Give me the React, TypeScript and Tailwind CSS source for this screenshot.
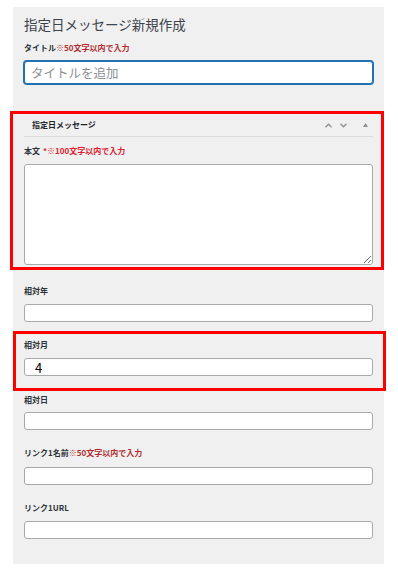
import React from 'react';

const font = { fontFamily: '"Noto Sans CJK JP", "Liberation Sans", sans-serif' };

function Label({ text, note, noteClass = 'text-[#b32d2e]' }: { text: string; note?: string; noteClass?: string }) {
  return (
    <div className="h-[12px] flex items-center text-[8px] font-bold leading-none text-[#2c3338] whitespace-nowrap">
      <span>{text}</span>
      {note && <span className={noteClass}>{note}</span>}
    </div>
  );
}

function Field({ value = '' }: { value?: string }) {
  return (
    <input
      readOnly
      defaultValue={value}
      className="block w-full h-[18px] bg-white border border-[#a7aaad] rounded-[3px] px-[10px] text-[13px] leading-none text-black outline-none"
    />
  );
}

export default function App() {
  return (
    <div className="w-[398px] h-[571px] bg-white overflow-hidden pt-[7px]" style={font}>
      <div className="ml-[13px] w-[371px] h-[557px] bg-[#f0f0f1] px-[11px] pt-[8px]">
        <h1 className="h-[20px] flex items-center text-[13.5px] leading-none text-[#3c434a] whitespace-nowrap">
          指定日メッセージ新規作成
        </h1>
        <div className="mt-[7px]">
          <Label text="タイトル" note="※50文字以内で入力" />
        </div>
        <input
          readOnly
          placeholder="タイトルを追加"
          className="mt-[7px] block w-full h-[23px] bg-white border border-[#2271b1] shadow-[0_0_0_1px_#2271b1] rounded-[3px] px-[6px] text-[12.5px] leading-none outline-none placeholder:text-[#8c8f94]"
        />

        <div className="mt-[27px] -ml-[14px] -mr-[11px] border-[3px] border-[#ff0000] pl-[11px] pr-[8px] pb-[2px]">
          <div className="h-[23px] flex items-center justify-between border-b border-[#dcdcde] pl-[8px] pr-[5px]">
            <span className="text-[8px] font-bold leading-none text-[#1d2327]">指定日メッセージ</span>
            <div className="flex items-center gap-[8px] text-[#8c8f94]">
              <svg width="7" height="5" viewBox="0 0 7 5" fill="none" stroke="currentColor" strokeWidth="1.3">
                <path d="M0.5 4.2 L3.5 1.2 L6.5 4.2" />
              </svg>
              <svg width="7" height="5" viewBox="0 0 7 5" fill="none" stroke="currentColor" strokeWidth="1.3">
                <path d="M0.5 0.8 L3.5 3.8 L6.5 0.8" />
              </svg>
              <svg width="5" height="4" viewBox="0 0 5 4" fill="currentColor" className="ml-[8px]">
                <path d="M0 4 L2.5 0 L5 4 Z" />
              </svg>
            </div>
          </div>
          <div className="mt-[8px]">
            <Label text="本文" note="*※100文字以内で入力" noteClass="ml-[3px] text-[#e0202e]" />
          </div>
          <textarea
            readOnly
            className="mt-[7px] block w-full h-[101px] bg-white border border-[#a7aaad] rounded-[3px] outline-none"
          />
        </div>

        <div className="mt-[15px]">
          <Label text="相対年" />
        </div>
        <div className="mt-[7px]">
          <Field />
        </div>

        <div className="mt-[9px] -ml-[11px] -mr-[13px] border-[3px] border-[#ff0000] pl-[8px] pr-[10px] pt-[5px] pb-[12px]">
          <Label text="相対月" />
          <div className="mt-[7px]">
            <Field value="4" />
          </div>
        </div>

        <div className="mt-[3px]">
          <Label text="相対日" />
        </div>
        <div className="mt-[6px]">
          <Field />
        </div>

        <div className="mt-[17px]">
          <Label text="リンク1名前" note="※50文字以内で入力" />
        </div>
        <div className="mt-[8px]">
          <Field />
        </div>

        <div className="mt-[17px]">
          <Label text="リンク1URL" />
        </div>
        <div className="mt-[7px]">
          <Field />
        </div>
      </div>
    </div>
  );
}
